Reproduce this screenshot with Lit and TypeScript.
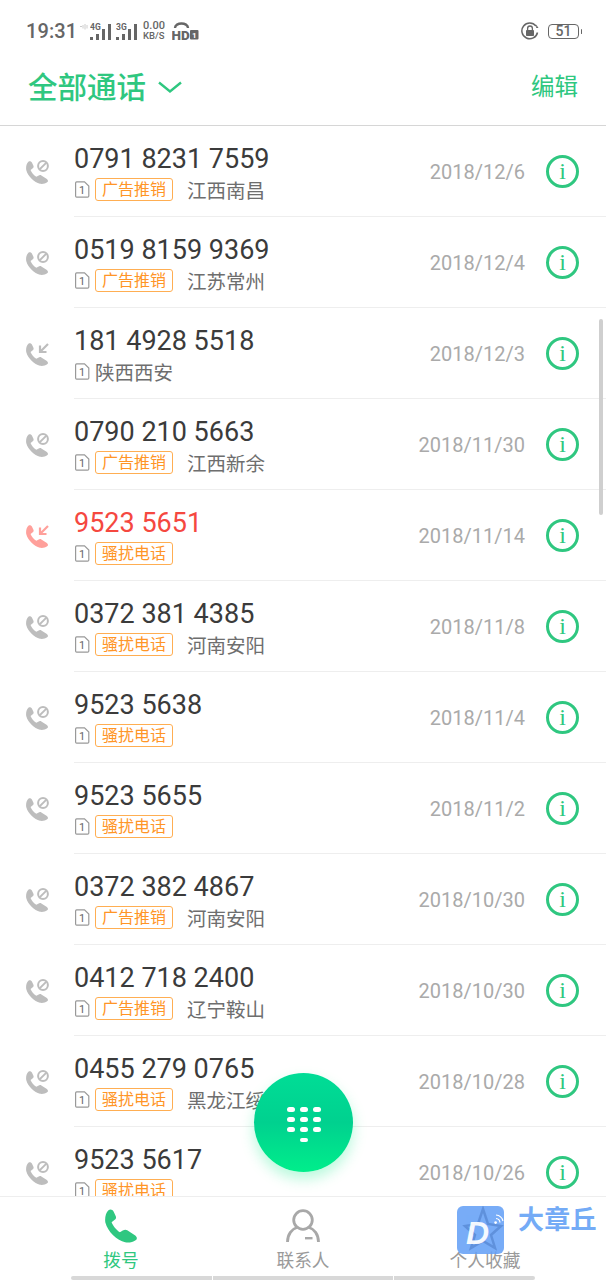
import { LitElement, html, css, svg } from "lit";
import { customElement } from "lit/decorators.js";

const HANDSET = "M10 3C15-1 22 1 25 7L31 20C33 25 31 28 27 31L19 37C22 46 33 60 43 66L51 61C56 58 60 58 64 60L87 75C93 80 93 86 88 89C80 94 70 97 58 95C35 90 8 65 1 38C-1 25 2 10 10 3Z";

type Row = { n: string; tag?: string; loc?: string; d: string; kind: "block" | "in"; red?: boolean };
const AD = "广告推销";
const HA = "骚扰电话";
const rows: Row[] = [
  { n: "0791 8231 7559", tag: AD, loc: "江西南昌", d: "2018/12/6", kind: "block" },
  { n: "0519 8159 9369", tag: AD, loc: "江苏常州", d: "2018/12/4", kind: "block" },
  { n: "181 4928 5518", loc: "陕西西安", d: "2018/12/3", kind: "in" },
  { n: "0790 210 5663", tag: AD, loc: "江西新余", d: "2018/11/30", kind: "block" },
  { n: "9523 5651", tag: HA, d: "2018/11/14", kind: "in", red: true },
  { n: "0372 381 4385", tag: HA, loc: "河南安阳", d: "2018/11/8", kind: "block" },
  { n: "9523 5638", tag: HA, d: "2018/11/4", kind: "block" },
  { n: "9523 5655", tag: HA, d: "2018/11/2", kind: "block" },
  { n: "0372 382 4867", tag: AD, loc: "河南安阳", d: "2018/10/30", kind: "block" },
  { n: "0412 718 2400", tag: AD, loc: "辽宁鞍山", d: "2018/10/30", kind: "block" },
  { n: "0455 279 0765", tag: HA, loc: "黑龙江绥化", d: "2018/10/28", kind: "block" },
  { n: "9523 5617", tag: HA, d: "2018/10/26", kind: "block" },
];

function callIcon(r: Row) {
  const c = r.red ? "#ffa09b" : "#bdbdbd";
  const badge =
    r.kind === "block"
      ? svg`<circle cx="17" cy="6" r="4.9" fill="none" stroke=${c} stroke-width="2"/><path d="M13.6 9.4L20.4 2.6" stroke=${c} stroke-width="2"/>`
      : svg`<path d="M22 2L14 10M14 3.5V10H20.5" fill="none" stroke=${c} stroke-width="2.2"/>`;
  return html`<svg class="call" width="24" height="24" viewBox="0 0 24 24">
    <path d=${HANDSET} fill=${c} transform="translate(0 1) scale(.24)"></path>${badge}
  </svg>`;
}

const sim = html`<span class="sim"><svg width="15" height="17" viewBox="0 0 15 17">
  <path d="M1.7.8H9.5L13.8 5V15A1.2 1.2 0 0 1 12.6 16.2H1.7A1.2 1.2 0 0 1 .6 15V2A1.2 1.2 0 0 1 1.7.8Z" fill="none" stroke="#999" stroke-width="1.2"></path>
  <text x="7.2" y="13" text-anchor="middle" font-size="11" font-family="Roboto" fill="#666">1</text>
</svg></span>`;

function signal(label: string) {
  return html`<svg class="sig" width="21" height="17" viewBox="0 0 21 17">
    <text x="0" y="7" font-size="8.5" font-weight="700" font-family="Roboto" fill="#666">${label}</text>
    <rect x="0" y="14" width="3" height="3" fill="#666"></rect>
    <rect x="6" y="11" width="3" height="6" fill="#666"></rect>
    <rect x="12" y="6" width="3" height="11" fill="#666"></rect>
    <rect x="18" y="1" width="3" height="16" fill="#666"></rect>
  </svg>`;
}

@customElement("app-root")
export class AppRoot extends LitElement {
  static styles = css`
    :host {
      display: block;
      width: 606px;
      height: 1280px;
      background: #fff;
      font-family: Roboto, "Noto Sans CJK SC", sans-serif;
    }
    .page { position: relative; width: 606px; height: 1280px; overflow: hidden; display: flex; flex-direction: column; background: #fff; }
    .status { height: 62px; flex: none; display: flex; align-items: center; padding: 0 27px 0 26px; color: #666; box-sizing: border-box; }
    .time { font-size: 20px; font-weight: 500; width: 54px; letter-spacing: .1px; }
    .vib { width: 10px; height: 17px; display: block; }
    .sig { display: block; margin-right: 5px; }
    .speed { width: 29px; margin-left: 1px; font-size: 9.5px; line-height: 10px; font-weight: 500; text-align: left; }
    .speed b { display: block; font-size: 11px; font-weight: 500; letter-spacing: .1px; }
    .hd { display: block; margin-top: 4px; }
    .spacer { flex: 1; }
    .lock { display: block; margin-right: 9px; }
    .batt { position: relative; width: 31px; height: 15px; border: 1.3px solid #666; border-radius: 4px; box-sizing: border-box; font-size: 14px; line-height: 13px; font-weight: 500; text-align: center; color: #666; }
    .batt::after { content: ""; position: absolute; right: -4px; top: 4px; width: 1.5px; height: 5px; background: #666; border-radius: 1px; }
    .head { height: 64px; flex: none; box-sizing: border-box; border-bottom: 1px solid #d6d6d6; display: flex; align-items: center; padding: 0 28px 12px; color: #2fc780; }
    .title { font-size: 29.5px; font-weight: 500; line-height: 50px; }
    .chev { display: block; margin-left: 11px; margin-bottom: 2px; }
    .edit { font-size: 23.5px; margin-left: auto; padding-bottom: 6px; }
    .list { flex: 1; min-height: 0; overflow: hidden; }
    .row { height: 91px; box-sizing: border-box; display: flex; align-items: center; padding-left: 26px; }
    .call { display: block; flex: none; width: 24px; height: 24px; margin-right: 24px; }
    .body { flex: 1; min-width: 0; height: 91px; box-sizing: border-box; border-bottom: 1px solid #eeeeee; display: flex; align-items: center; padding-right: 27px; }
    .main { flex: 1; min-width: 0; padding-bottom: 1px; }
    .num { font-size: 27px; line-height: 38px; color: #3b3b3b; white-space: nowrap; }
    .num.red { color: #f5483f; }
    .sub { display: flex; align-items: center; height: 25px; margin-top: -1px; white-space: nowrap; }
    .sim { width: 20px; flex: none; display: block; margin-left: 1px; }
    .sim svg { display: block; }
    .tag { width: 78px; height: 23px; box-sizing: border-box; border: 1px solid #ffae52; border-radius: 3px; color: #ff9526; font-size: 16px; line-height: 22px; text-align: center; flex: none; margin-right: 14px; }
    .loc { font-size: 19.5px; color: #6e6e6e; }
    .date { font-size: 20px; color: #aaaaaa; margin-right: 21px; padding-top: 2px; }
    .info { width: 33px; height: 33px; box-sizing: border-box; border: 3px solid #2fc780; border-radius: 50%; flex: none; color: #2fc780; font-family: "Liberation Serif", serif; font-size: 24px; line-height: 26px; text-align: center; }
    .tabs { height: 84px; flex: none; border-top: 1px solid #eee; box-sizing: border-box; display: flex; flex-direction: column; background: #fff; position: relative; }
    .tabrow { flex: 1; display: grid; grid-template-columns: repeat(3, 1fr); padding: 0 30px; }
    .tab { display: flex; flex-direction: column; align-items: center; padding-top: 12px; color: #9a9a9a; font-size: 17.7px; line-height: 26px; }
    .tab.on { color: #2fc780; }
    .tab svg { display: block; height: 34px; margin-bottom: 5px; }
    .homebar { height: 4px; padding: 0 71px; display: flex; gap: 1px; }
    .homebar i { background: #d8d8d8; flex: 1; }
    .homebar i:first-child { flex: none; width: 141px; border-radius: 2px 0 0 2px; }
    .homebar i:last-child { flex: none; width: 141px; border-radius: 0 2px 2px 0; }
    .scroll { position: absolute; left: 599px; top: 319px; width: 4px; height: 196px; background: #cfcfcf; border-radius: 2px; }
    .fab { position: absolute; left: 254px; top: 1073px; width: 99px; height: 99px; border-radius: 50%; background: linear-gradient(180deg, #00dd96 0%, #00d18f 50%, #00ee8b 100%); box-shadow: 0 7px 14px rgba(0, 235, 130, .28); display: grid; grid-template-columns: repeat(3, 8px); grid-auto-rows: 4.5px; column-gap: 5px; row-gap: 5.7px; justify-content: center; align-content: start; padding-top: 34px; box-sizing: border-box; }
    .fab i { background: #fff; border-radius: 3px; }
    .fab i.last { grid-column: 2; }
    .wm { position: absolute; left: 457px; top: 1206px; display: flex; align-items: flex-start; }
    .wm-box { position: relative; width: 47px; height: 48px; border-radius: 6px; background: rgba(98, 158, 246, .86); overflow: hidden; }
    .wm-box svg { position: absolute; left: 0; top: 0; }
    .wm-d { position: absolute; left: 9px; top: 4px; color: #fff; font: italic 700 32px/46px "Liberation Sans", sans-serif; opacity: .92; }
    .wm-t { margin-left: 14px; margin-top: -3px; color: #74abf6; font-size: 26px; line-height: 34px; font-weight: 700; letter-spacing: .2px; white-space: nowrap; }
  `;

  render() {
    return html`<div class="page">
      <div class="status">
        <span class="time">19:31</span>
        <svg class="vib" viewBox="0 0 10 17"><path d="M0 3.5H2M3 2V5.5M5 1V6.5M7 2V5.5" stroke="#ccc" stroke-width="1" fill="none"></path></svg>
        ${signal("4G")}${signal("3G")}
        <span class="speed"><b>0.00</b>KB/S</span>
        <svg class="hd" width="27" height="22" viewBox="0 0 27 22">
          <path d="M3 6C3 0 16 0 16 6" fill="none" stroke="#666" stroke-width="2.4"></path>
          <text x="-.5" y="17.500" font-size="13.500" font-weight="900" font-family="Roboto" fill="#666">HD</text>
          <rect x="18" y="8" width="8.500" height="9.500" rx="1" fill="#666"></rect>
          <text x="22.200" y="16" font-size="8" font-weight="700" text-anchor="middle" font-family="Roboto" fill="#fff">1</text>
        </svg>
        <span class="spacer"></span>
        <svg class="lock" width="18" height="18" viewBox="0 0 18 18">
          <path d="M16.500 10.500A7.900 7.900 0 1 1 15 4" fill="none" stroke="#666" stroke-width="1.500"></path>
          <path d="M15.200 2.500V6H17.500Z" fill="#666"></path>
          <rect x="5" y="8" width="8" height="6" rx=".8" fill="#666"></rect>
          <path d="M6.600 8V6.400A2.400 2.400 0 0 1 11.400 6.400V8" fill="none" stroke="#666" stroke-width="1.300"></path>
        </svg>
        <span class="batt">51</span>
      </div>
      <div class="head">
        <span class="title">全部通话</span>
        <svg class="chev" width="26" height="14" viewBox="0 0 26 14"><path d="M2 2.500L13 11.500L24 2.500" fill="none" stroke="#2fc780" stroke-width="2.400"></path></svg>
        <span class="edit">编辑</span>
      </div>
      <div class="list">
        ${rows.map(
          (r) => html`<div class="row">
            ${callIcon(r)}
            <div class="body">
              <div class="main">
                <div class="num ${r.red ? "red" : ""}">${r.n}</div>
                <div class="sub">
                  ${sim}
                  ${r.tag ? html`<span class="tag">${r.tag}</span>` : ""}
                  ${r.loc ? html`<span class="loc">${r.loc}</span>` : ""}
                </div>
              </div>
              <span class="date">${r.d}</span>
              <span class="info">i</span>
            </div>
          </div>`
        )}
      </div>
      <div class="tabs">
        <div class="tabrow">
          <div class="tab on">
            <svg width="32" height="34" viewBox="0 0 92 96"><path d=${HANDSET} fill="#2fc780"></path></svg>
            <span>拨号</span>
          </div>
          <div class="tab">
            <svg width="36" height="34" viewBox="0 0 36 34">
              <circle cx="18" cy="11" r="9.300" fill="none" stroke="#a8a8a8" stroke-width="2.800"></circle>
              <path d="M2.500 33C2.500 25 7 20 12 18.500M33.500 33C33.500 25 29 20 24 18.500" fill="none" stroke="#a8a8a8" stroke-width="2.800"></path>
              <rect x="20" y="28" width="7.500" height="2.400" fill="#a8a8a8"></rect>
            </svg>
            <span>联系人</span>
          </div>
          <div class="tab">
            <svg width="36" height="34" viewBox="0 0 36 34"></svg>
            <span>个人收藏</span>
          </div>
        </div>
        <div class="homebar"><i></i><i></i><i></i></div>
      </div>
      <div class="scroll"></div>
      <div class="fab">
        <i></i><i></i><i></i><i></i><i></i><i></i><i></i><i></i><i></i><i class="last"></i>
      </div>
      <div class="wm">
        <div class="wm-box">
          <svg width="47" height="48" viewBox="0 0 47 48">
            <path d="M26 3L31 18L44 20L34 29L38 42L26 35L14 42L18 29L8 20L21 18Z" fill="none" stroke="#4f7fc9" stroke-width="2.500" opacity=".6"></path>
            <path d="M39 12.500A4.500 4.500 0 0 1 43 16.500M39 9A8 8 0 0 1 46 15" fill="none" stroke="#fff" stroke-width="1.200"></path>
            <circle cx="38.600" cy="16.600" r="1.300" fill="#fff"></circle>
          </svg>
          <span class="wm-d">D</span>
        </div>
        <span class="wm-t">大章丘</span>
      </div>
    </div>`;
  }
}
